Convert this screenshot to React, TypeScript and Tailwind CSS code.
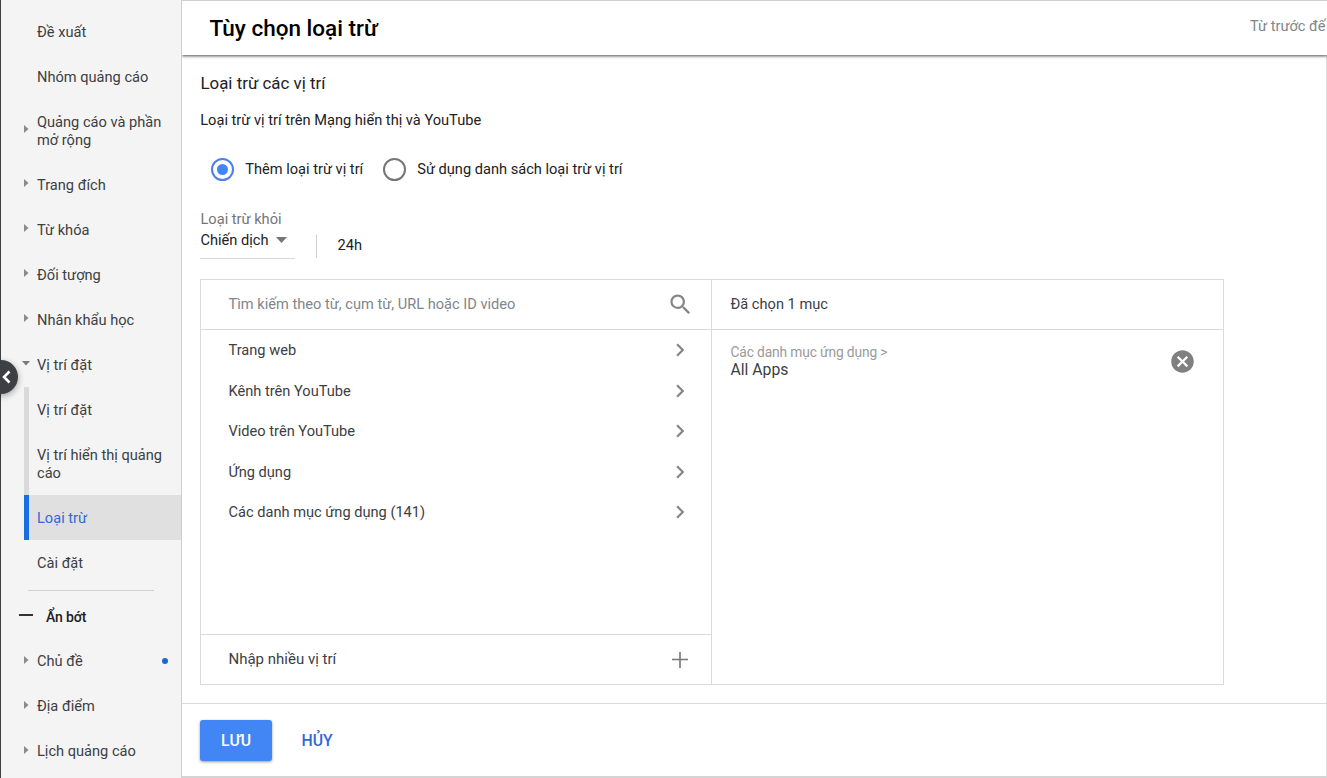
import { clsx } from "clsx";
import { MdCancel, MdChevronRight, MdSearch } from "react-icons/md";

type NavItem = {
  label: string;
  arrow?: "right" | "down";
  nested?: boolean;
  active?: boolean;
  dot?: boolean;
};

const NAV_ITEMS: NavItem[] = [
  { label: "Đề xuất" },
  { label: "Nhóm quảng cáo" },
  { label: "Quảng cáo và phần mở rộng", arrow: "right" },
  { label: "Trang đích", arrow: "right" },
  { label: "Từ khóa", arrow: "right" },
  { label: "Đối tượng", arrow: "right" },
  { label: "Nhân khẩu học", arrow: "right" },
  { label: "Vị trí đặt", arrow: "down" },
  { label: "Vị trí đặt", nested: true },
  { label: "Vị trí hiển thị quảng cáo", nested: true },
  { label: "Loại trừ", nested: true, active: true },
  { label: "Cài đặt" },
];

const MORE_ITEMS: NavItem[] = [
  { label: "Chủ đề", arrow: "right", dot: true },
  { label: "Địa điểm", arrow: "right" },
  { label: "Lịch quảng cáo", arrow: "right" },
];

const CATEGORIES = [
  "Trang web",
  "Kênh trên YouTube",
  "Video trên YouTube",
  "Ứng dụng",
  "Các danh mục ứng dụng (141)",
];

function Arrow({ direction }: { direction?: "right" | "down" }) {
  if (direction === "right") {
    return (
      <svg width="5" height="8" viewBox="0 0 5 8" className="mb-[3px] ml-[23px] fill-[#8a8a8a]">
        <path d="M0 0l4.500 4L0 8z" />
      </svg>
    );
  }
  if (direction === "down") {
    return (
      <svg width="8" height="5" viewBox="0 0 8 5" className="mb-[3px] ml-[21px] fill-[#7a7a7a]">
        <path d="M0 0h8L4 4.500z" />
      </svg>
    );
  }
  return null;
}

function NavRow({ item }: { item: NavItem }) {
  return (
    <a
      className={clsx(
        "flex min-h-[45px] shrink-0 items-stretch",
        item.active ? "text-[#3367d6]" : "text-[#3c4043]"
      )}
    >
      {item.nested ? (
        <span className="flex w-9 shrink-0 pl-[23px]">
          <span className={clsx("w-[5px]", item.active ? "bg-[#1a6fe0]" : "bg-[#dadada]")} />
          <span className={clsx("flex-1", item.active && "bg-[#e0e0e0]")} />
        </span>
      ) : (
        <span className="flex w-9 shrink-0 items-center">
          <Arrow direction={item.arrow} />
        </span>
      )}
      <span
        className={clsx(
          "flex flex-1 items-center py-[13.5px] pr-[13px] leading-[18px]",
          item.active && "bg-[#e0e0e0]"
        )}
      >
        <span className="flex-1">{item.label}</span>
        {item.dot && <span className="size-1.5 rounded-full bg-[#1967d2]" />}
      </span>
    </a>
  );
}

function Sidebar() {
  return (
    <nav className="relative flex w-[182px] shrink-0 flex-col border-r border-l border-r-[#cfcfcf] border-l-[#3c4043] bg-[#f4f4f4] pt-[9px]">
      {NAV_ITEMS.map((item, i) => (
        <NavRow key={i} item={item} />
      ))}
      <div className="mt-[5px] ml-[27px] h-px w-[126px] shrink-0 bg-[#d2d2d2]" />
      <button className="flex h-[47px] shrink-0 items-center pt-[5px] pl-[18px] text-left font-medium text-[#202124]">
        <span className="mb-1 h-[1.5px] w-[14px] bg-[#333]" />
        <span className="ml-[13px] text-[14px] tracking-[-0.15px]">Ẩn bớt</span>
      </button>
      <div className="flex flex-col [&_svg]:mb-px">
        {MORE_ITEMS.map((item) => (
          <NavRow key={item.label} item={item} />
        ))}
      </div>
      {/* collapse handle sits over the window edge */}
      <button className="absolute top-[360px] -left-[17px] flex size-[34px] items-center justify-end rounded-full bg-[#3c4043] pr-[7px] shadow-[0_2px_6px_rgba(0,0,0,0.35)]">
        <svg width="10" height="14" viewBox="0 0 10 14" fill="none" stroke="#fff" strokeWidth="2.6">
          <path d="M8.500 1.500L3 7l5.500 5.500" />
        </svg>
      </button>
    </nav>
  );
}

function Radio({ label, checked }: { label: string; checked?: boolean }) {
  return (
    <label className="flex items-center">
      <span
        className={clsx(
          "flex size-[23px] items-center justify-center rounded-full border-2",
          checked ? "border-[#4a80e8]" : "border-[#757575]"
        )}
      >
        {checked && <span className="size-[11px] rounded-full bg-[#4285f4]" />}
      </span>
      <span className="ml-[11px]">{label}</span>
    </label>
  );
}

function PlacementPicker() {
  return (
    <div className="mt-5 flex h-[406px] w-[1024px] border border-[#dadada] text-[#3c4043]">
      <div className="flex w-[511px] flex-col border-r border-[#dadada]">
        <div className="flex h-[50px] items-center border-b border-[#dadada] pr-[17.5px] pl-[27.5px]">
          <span className="flex-1 text-[#80868b]">Tìm kiếm theo từ, cụm từ, URL hoặc ID video</span>
          <MdSearch size={27} className="text-[#858585]" />
        </div>
        <ul className="flex-1">
          {CATEGORIES.map((name) => (
            <li key={name} className="flex h-[40.5px] items-center pr-[18px] pl-[27.5px]">
              <span className="flex-1 pt-[2px]">{name}</span>
              <MdChevronRight size={26} className="text-[#858585]" />
            </li>
          ))}
        </ul>
        <div className="flex h-[50px] items-center border-t border-[#dadada] pr-[23px] pl-[27.5px]">
          <span className="flex-1 text-[15px]">Nhập nhiều vị trí</span>
          <svg width="16" height="16" viewBox="0 0 16 16" stroke="#757575" strokeWidth="1.6">
            <path d="M0 7.500h16M8 0v16" />
          </svg>
        </div>
      </div>
      <div className="flex flex-1 flex-col">
        <div className="flex h-[50px] items-center border-b border-[#dadada] pl-[18.5px]">Đã chọn 1 mục</div>
        <div className="flex items-start pt-[13px] pr-[27px] pl-[18.5px]">
          <div className="flex-1 leading-[18px]">
            <div className="text-[13.8px] tracking-[-0.14px] text-[#9a9a9a]">Các danh mục ứng dụng &gt;</div>
            <div className="text-[15.75px]">All Apps</div>
          </div>
          <MdCancel size={27} className="mt-[5px] text-[#808080]" />
        </div>
      </div>
    </div>
  );
}

export default function App() {
  return (
    <div className="flex h-[778px] w-[1327px] overflow-hidden bg-white font-[Roboto,sans-serif] text-[14.625px] text-[#202124]">
      <Sidebar />
      <div className="flex min-w-0 flex-1 flex-col">
        {/* the clip keeps the header shadow off the sidebar */}
        <header className="relative flex h-[55px] shrink-0 items-center justify-between border-t border-[#cfcfcf] pl-[27.5px] shadow-[0_1px_3px_rgba(0,0,0,0.7)] [clip-path:inset(0_0_-6px_0)]">
          <h1 className="pt-[2px] text-[22.5px] font-medium text-black">Tùy chọn loại trừ</h1>
          <span className="w-[77px] pb-[2px] whitespace-nowrap text-[#80868b]">Từ trước đế</span>
        </header>
        <main className="flex flex-1 flex-col border-r border-b-2 border-r-[#dadada] border-b-[#d4d4d4]">
          <div className="flex h-[649px] flex-col border-b border-[#dadada] pl-[18px]">
            <h2 className="mt-[16px] pl-[0.5px] text-[16.875px] leading-6">Loại trừ các vị trí</h2>
            <p className="mt-[15px] pl-[0.25px] leading-5">Loại trừ vị trí trên Mạng hiển thị và YouTube</p>
            <div className="mt-[28px] flex gap-5 pl-[11.25px]">
              <Radio label="Thêm loại trừ vị trí" checked />
              <Radio label="Sử dụng danh sách loại trừ vị trí" />
            </div>
            <div className="mt-[28px] flex h-[50px]">
              <div className="flex w-[95px] flex-col border-b border-[#dadada]">
                <span className="pl-[0.5px] leading-5 text-[#757575]">Loại trừ khỏi</span>
                <span className="flex items-center pl-[0.5px] leading-[22px]">
                  Chiến dịch
                  <svg width="11" height="6" viewBox="0 0 11 6" className="ml-[7px] fill-[#757575]">
                    <path d="M0 0h11L5.500 6z" />
                  </svg>
                </span>
              </div>
              <div className="mt-[26px] ml-[21px] flex h-[23px] items-center border-l border-[#cfcfcf] pb-px pl-[20.5px]">
                24h
              </div>
            </div>
            <PlacementPicker />
          </div>
          <footer className="flex items-center pt-4 pl-[18px]">
            <button className="h-[41px] w-[72px] rounded-[3px] bg-[#4285f4] text-[15.750px] font-medium text-white shadow-[0_1px_3px_rgba(0,0,0,0.4)]">
              LƯU
            </button>
            <button className="ml-[29.5px] text-[15.750px] font-medium text-[#3367d6]">HỦY</button>
          </footer>
        </main>
      </div>
    </div>
  );
}
